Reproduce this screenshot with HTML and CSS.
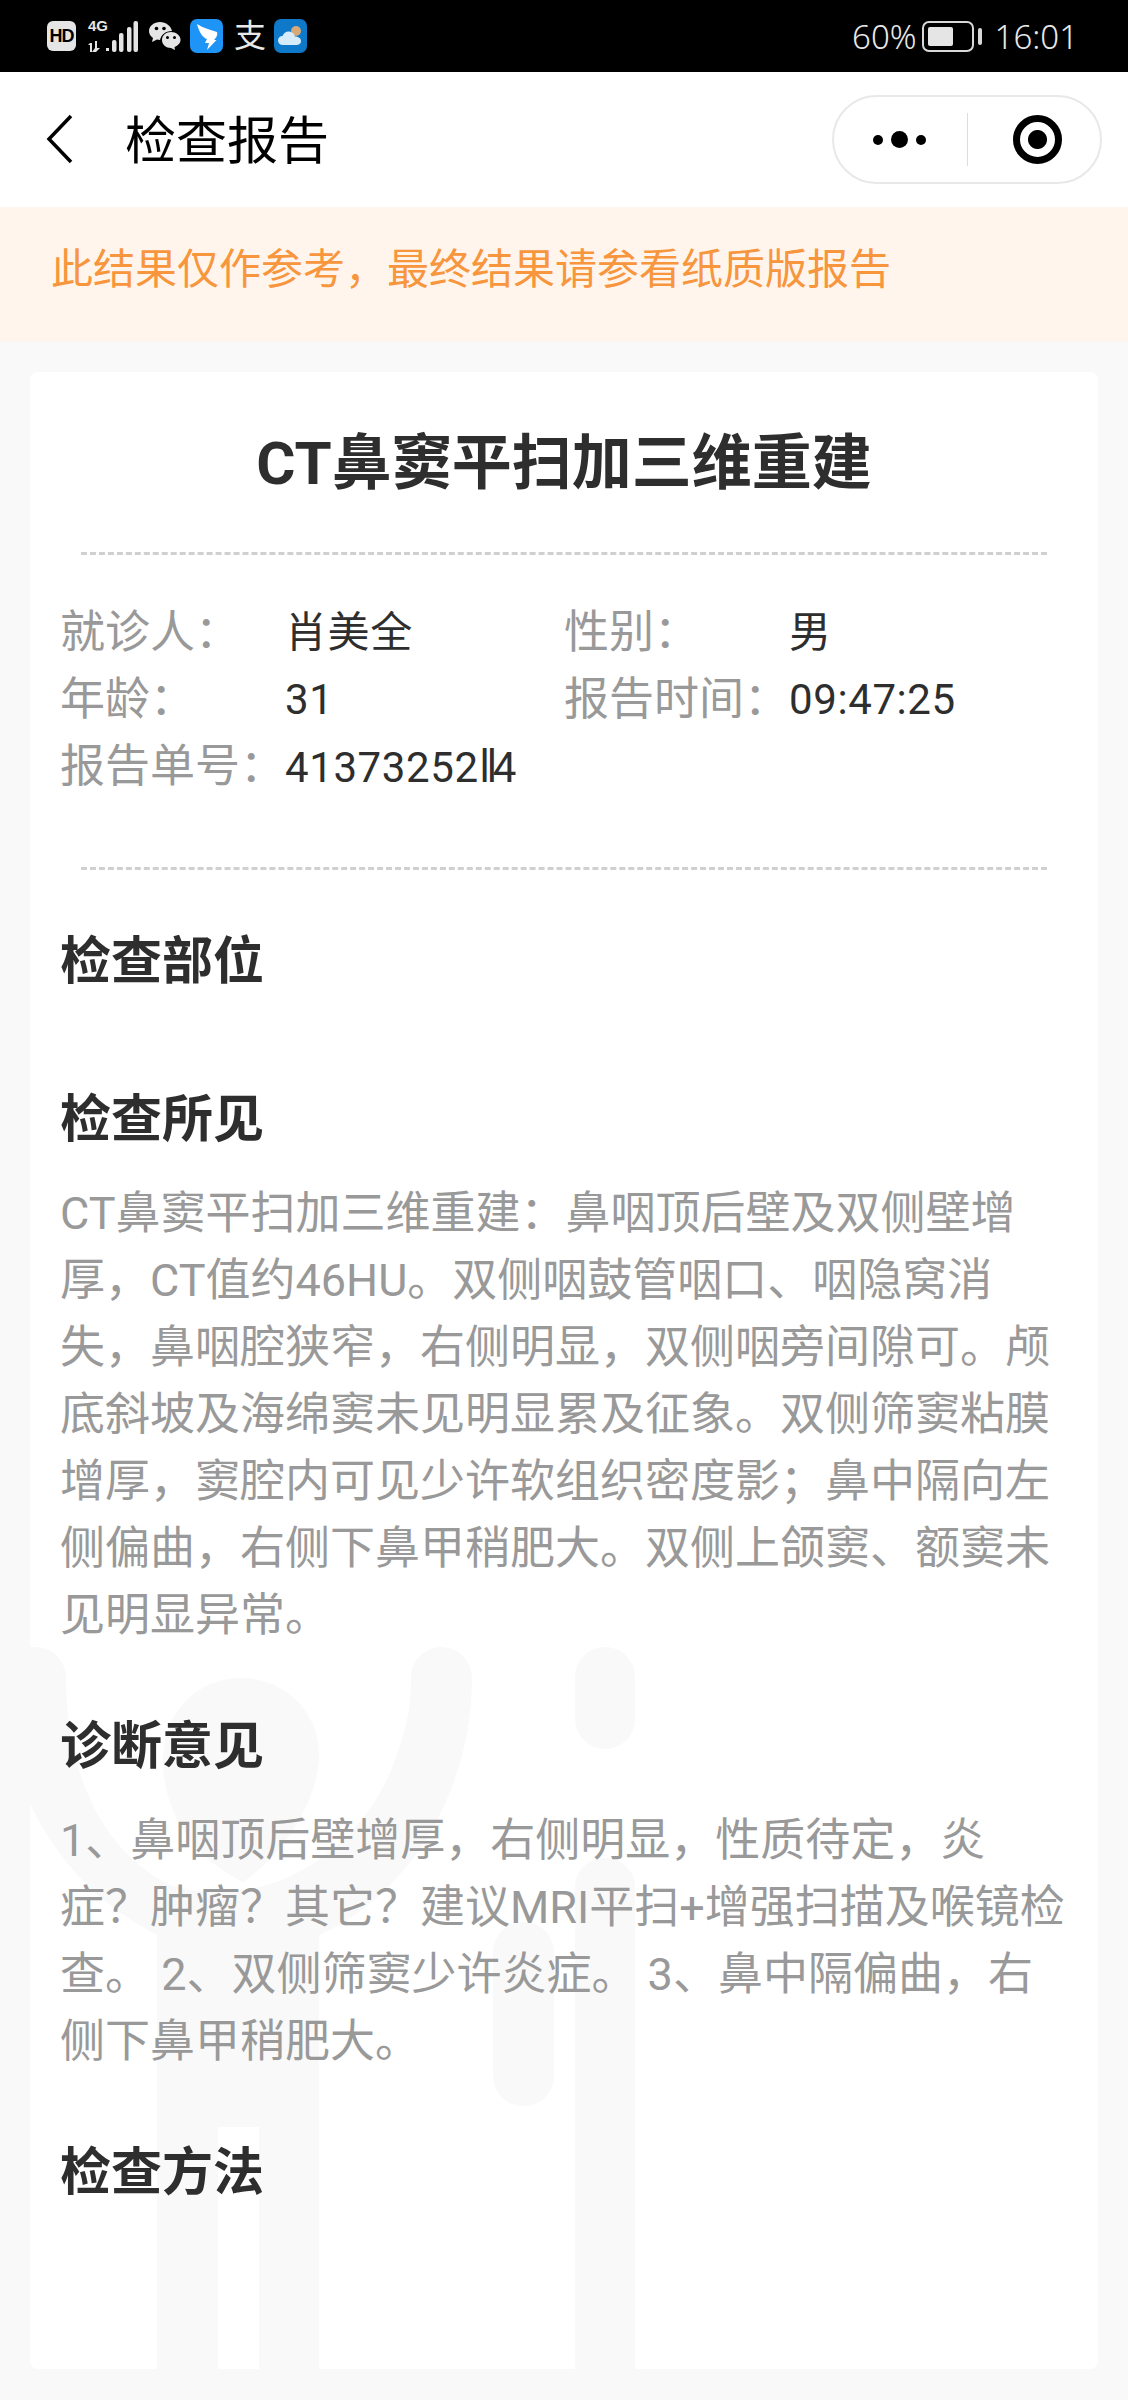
FILE: index.html
```html
<!DOCTYPE html>
<html lang="zh-CN">
<head>
<meta charset="UTF-8">
<meta name="viewport" content="width=device-width, initial-scale=1.0">
<title>检查报告</title>
<link rel="stylesheet" href="styles.css">
</head>
<body>
    <div class="page">
        <div class="status-bar">
            <div class="status-left">
                <span class="hd-badge">HD</span>
                <div class="signal">
                    <span class="signal-type">4G</span>
                    <svg class="signal-bars" width="50" height="32" viewBox="0 0 50 32">
                        <path d="M2 23h2v9H2zM0 25l2-2v2zM7 21h2v7h3l-4 4-4-0 3-4z" fill="#e5e5e5"/>
                        <rect x="18" y="28" width="3" height="3" fill="#e5e5e5"/>
                        <rect x="24" y="20" width="4.5" height="12" rx="2" fill="#e5e5e5"/>
                        <rect x="31" y="13" width="4.5" height="19" rx="2" fill="#e5e5e5"/>
                        <rect x="39" y="7" width="4.5" height="25" rx="2" fill="#e5e5e5"/>
                        <rect x="45.5" y="1" width="4.5" height="31" rx="2" fill="#e5e5e5"/>
                    </svg>
                </div>
                <svg class="icon-wechat" width="32" height="28" viewBox="0 0 32 28">
                    <path d="M11 0C5 0 0 4 0 9c0 3 1.500 5 4 7l-1 4 5-2.500 3 .5C12 13 16 9 23 9 22 4 17 0 11 0z" fill="#e5e5e5"/>
                    <path d="M22 10c-5 0-9 3.500-9 8s4 8 9 8l4 2-.5-3c3.500-1.500 6-4 6-7 0-4.500-4.500-8-9.500-8z" fill="#e5e5e5"/>
                    <circle cx="7.500" cy="6.500" r="1.800" fill="#000"/>
                    <circle cx="15" cy="6.500" r="1.800" fill="#000"/>
                    <circle cx="18.500" cy="15.500" r="1.500" fill="#000"/>
                    <circle cx="25.500" cy="15.500" r="1.500" fill="#000"/>
                </svg>
                <svg class="icon-ding" width="33" height="34" viewBox="0 0 33 34">
                    <rect width="33" height="34" rx="7" fill="#1e94f6"/>
                    <path d="M7 5c6 4 14 6 20 8 1 3-1 6-3 8h2.500L17 31l2-7h-4l2-4C13 19 9 13 7 5z" fill="#fff"/>
                </svg>
                <span class="icon-alipay">支</span>
                <svg class="icon-weather" width="33" height="34" viewBox="0 0 33 34">
                    <rect width="33" height="34" rx="7" fill="#0e78c9"/>
                    <circle cx="22" cy="12" r="5" fill="#d9a878"/>
                    <path d="M9 26c-3 0-5-2-5-4.500S6 17 8.500 17c1-3 4-5 7-4.500 3 .5 5 2.500 5.500 5 3 0 6 1.500 6 4.500s-2.500 4-5 4z" fill="#d6ecfa"/>
                </svg>
            </div>
            <div class="status-right">
                <span>60%</span>
                <div class="battery"><div class="battery-level"></div></div>
                <div class="battery-nub"></div>
                <span class="clock">16:01</span>
            </div>
        </div>

        <div class="nav-bar">
            <svg class="back-icon" width="30" height="50" viewBox="0 0 30 50">
                <path d="M26 2 4 25l22 23" fill="none" stroke="#000" stroke-width="3.500"/>
            </svg>
            <div class="nav-title">检查报告</div>
            <div class="capsule">
                <div class="capsule-more">
                    <span class="dot"></span>
                    <span class="dot dot-big"></span>
                    <span class="dot"></span>
                </div>
                <div class="capsule-line"></div>
                <div class="capsule-close"><span class="target"></span></div>
            </div>
        </div>

        <div class="notice">此结果仅作参考，最终结果请参看纸质版报告</div>

        <div class="card">
            <svg class="watermark" width="1068" height="722" viewBox="30 1647 1068 722">
                <path d="M30 1647H36C53 1647 66 1661 66 1678C66 1770 100 1850 170 1885C190 1893 225 1893 245 1890C310 1880 370 1830 395 1760C408 1725 411 1705 411 1678C411 1661 425 1647 441 1647C458 1647 472 1661 472 1678C472 1790 410 1895 319 1935V2369H259V2127H218V2369H157V1935C100 1905 60 1865 30 1804Z" fill="#f9f9f9"/>
                <path d="M163 1760C163 1712 198 1678 241 1678C285 1678 319 1712 319 1755C319 1795 289 1850 243 1882C193 1858 163 1812 163 1760Z" fill="#f9f9f9"/>
                <rect x="575" y="1647" width="60" height="102" rx="30" fill="#f9f9f9"/>
                <rect x="493" y="1922" width="61" height="184" rx="30" fill="#f9f9f9"/>
                <path d="M575 2369V1888C575 1871 588 1858 605 1858C622 1858 635 1871 635 1888V2369Z" fill="#f9f9f9"/>
            </svg>
            <div class="card-inner">
                <h1>CT鼻窦平扫加三维重建</h1>
                <div class="info">
                    <span class="info-label">就诊人：</span><span class="info-value">肖美全</span>
                    <span class="info-label">性别：</span><span class="info-value">男</span>
                    <span class="info-label">年龄：</span><span class="info-value">31</span>
                    <span class="info-label">报告时间：</span><span class="info-value">09:47:25</span>
                    <span class="info-label">报告单号：</span><span class="info-value">41373252<span class="bars">‖</span>4</span>
                </div>

                <div class="section">
                    <h2>检查部位</h2>
                </div>
                <div class="section">
                    <h2>检查所见</h2>
                    <p>CT鼻窦平扫加三维重建：鼻咽顶后壁及双侧壁增厚，CT值约46HU。双侧咽鼓管咽口、咽隐窝消失，鼻咽腔狭窄，右侧明显，双侧咽旁间隙可。颅底斜坡及海绵窦未见明显累及征象。双侧筛窦粘膜增厚，窦腔内可见少许软组织密度影；鼻中隔向左侧偏曲，右侧下鼻甲稍肥大。双侧上颌窦、额窦未见明显异常。</p>
                </div>
                <div class="section">
                    <h2>诊断意见</h2>
                    <p>1、鼻咽顶后壁增厚，右侧明显，性质待定，炎症？肿瘤？其它？建议MRI平扫+增强扫描及喉镜检查。 2、双侧筛窦少许炎症。 3、鼻中隔偏曲，右侧下鼻甲稍肥大。</p>
                </div>
                <div class="section">
                    <h2>检查方法</h2>
                </div>
            </div>
        </div>
    </div>
</body>
</html>
```

FILE: styles.css
```css
* {
    box-sizing: border-box;
}
body {
    margin: 0;
    padding: 0;
    font-family: Roboto, "Noto Sans CJK SC", sans-serif;
    background-color: #f9f9f9;
}
.page {
    display: flex;
    flex-direction: column;
    height: 2400px;
    overflow: hidden;
}

/* status bar */
.status-bar {
    display: flex;
    justify-content: space-between;
    align-items: center;
    height: 72px;
    padding: 0 50px 0 47px;
    background-color: #000;
    color: #e8e8e8;
}
.status-left,
.status-right {
    display: flex;
    align-items: center;
}
.hd-badge {
    width: 29px;
    height: 30px;
    border-radius: 6px;
    background-color: #e5e5e5;
    color: #000;
    font-family: "Liberation Sans", sans-serif;
    font-size: 18px;
    font-weight: 700;
    line-height: 30px;
    text-align: center;
    letter-spacing: -1px;
}
.signal {
    position: relative;
    width: 50px;
    height: 32px;
    margin-left: 12px;
}
.signal-type {
    position: absolute;
    top: -2px;
    left: 0;
    color: #e5e5e5;
    font-family: "Liberation Sans", sans-serif;
    font-size: 15px;
    font-weight: 700;
    line-height: 16px;
}
.icon-wechat {
    margin-left: 11px;
}
.icon-ding {
    margin-left: 9px;
}
.icon-alipay {
    width: 32px;
    margin-left: 11px;
    color: #e8e8e8;
    font-size: 32px;
    line-height: 34px;
}
.icon-weather {
    margin-left: 8px;
}
.status-right {
    font-family: "Noto Sans", sans-serif;
    font-size: 33px;
    font-weight: 300;
}
.battery {
    width: 52px;
    height: 31px;
    margin-left: 5px;
    padding: 4px;
    border: 2px solid #d8d8d8;
    border-radius: 7px;
}
.battery-level {
    width: 25px;
    height: 19px;
    border-radius: 2px;
    background-color: #e5e5e5;
}
.battery-nub {
    width: 4px;
    height: 17px;
    margin-left: 4px;
    border-radius: 2px;
    background-color: #d8d8d8;
}
.clock {
    margin-left: 13px;
}

/* nav bar */
.nav-bar {
    display: flex;
    align-items: center;
    height: 135px;
    padding: 0 26px 0 45px;
    background-color: #fff;
}
.back-icon {
    margin-top: -2px;
}
.nav-title {
    flex: 1;
    margin-top: 4px;
    margin-left: 50px;
    color: #000;
    font-size: 51px;
    line-height: 70px;
}
.capsule {
    display: flex;
    align-items: center;
    width: 270px;
    height: 89px;
    border: 2px solid #e8e8e8;
    border-radius: 45px;
}
.capsule-more {
    display: flex;
    align-items: center;
    justify-content: center;
    gap: 8px;
    width: 133px;
    padding-right: 2px;
}
.dot {
    width: 10px;
    height: 10px;
    border-radius: 50%;
    background-color: #000;
}
.dot-big {
    width: 17px;
    height: 17px;
}
.capsule-line {
    width: 1px;
    height: 53px;
    background-color: #ddd;
}
.capsule-close {
    display: flex;
    flex: 1;
    justify-content: center;
    padding-left: 6px;
}
.target {
    width: 49px;
    height: 49px;
    border: 7px solid #000;
    border-radius: 50%;
    background: radial-gradient(circle, #000 0, #000 9px, #fff 10px);
}

/* notice */
.notice {
    height: 135px;
    padding: 0 51px;
    background-color: #fff5ed;
    color: #f7963d;
    font-size: 42px;
    line-height: 126px;
}

/* report card */
.card {
    position: relative;
    flex: 1;
    margin: 30px 30px 31px;
    border-radius: 8px;
    background-color: #fff;
    overflow: hidden;
}
.watermark {
    position: absolute;
    top: 1275px;
    left: 0;
}
.card-inner {
    position: relative;
    padding: 52px 30px 0;
}
h1 {
    margin: 0;
    padding-bottom: 48px;
    color: #2e2e2e;
    font-size: 60px;
    font-weight: 700;
    line-height: 80px;
    text-align: center;
}
.info {
    position: relative;
    display: grid;
    grid-template-columns: 225px 279px 225px 1fr;
    margin-bottom: 57px;
    padding: 47px 0 69px;
    font-size: 45px;
    line-height: 67px;
    white-space: nowrap;
}
.info::before,
.info::after {
    content: "";
    position: absolute;
    left: 21px;
    right: 21px;
    height: 0;
    border-top: 3px dashed #d0d0d0;
}
.info::before {
    top: 0;
}
.info::after {
    bottom: 0;
}
.info-label {
    color: #999;
}
.info-value {
    color: #2e2e2e;
    font-size: 42px;
    letter-spacing: 0.6px;
}
.bars {
    font-family: "Liberation Sans", sans-serif;
    font-size: 46px;
    font-weight: 400;
    letter-spacing: -5px;
}
.section {
    padding-bottom: 63px;
}
h2 {
    margin: 0 0 25px;
    color: #2e2e2e;
    font-size: 51px;
    font-weight: 700;
    line-height: 70px;
}
p {
    margin: 0;
    color: #999;
    font-size: 45px;
    line-height: 67px;
}
```
